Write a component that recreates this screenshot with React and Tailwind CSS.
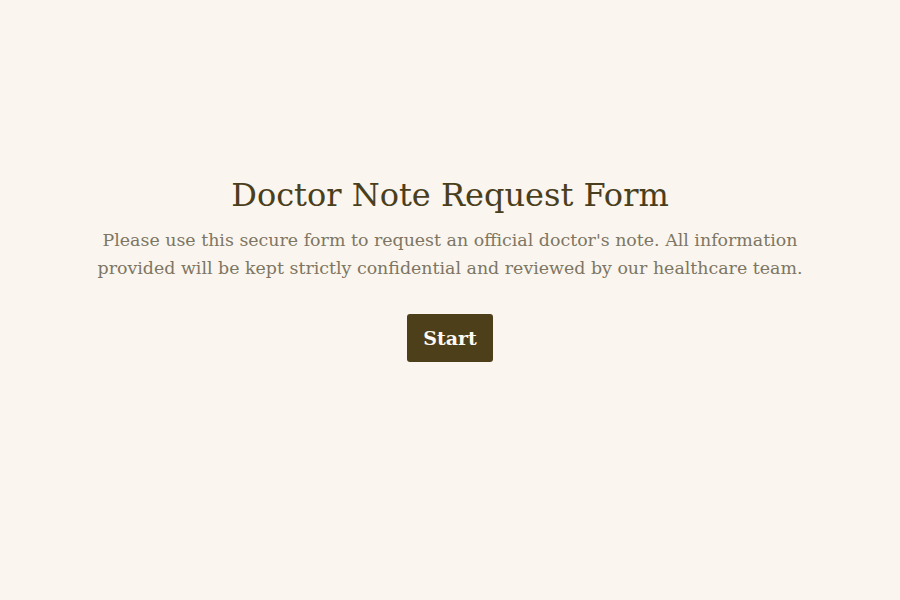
export default function App() {
  return (
    <div className="min-h-screen w-full bg-[#faf5ee] flex flex-col items-center pt-[173px] font-['DejaVu_Serif',serif]">
      <h1 className="text-[32px] leading-[44px] text-[#4a3f1d]">Doctor Note Request Form</h1>
      <p className="mt-[9px] max-w-[740px] text-center text-[17.4px] leading-[28px] text-[#7d7663]">
        Please use this secure form to request an official doctor's note. All information provided will be kept strictly confidential and reviewed by our healthcare team.
      </p>
      <button className="mt-[32px] h-[48px] px-[16px] rounded-[3px] bg-[#4d3f1a] text-[#fdf9f0] text-[19px] font-bold">
        Start
      </button>
    </div>
  );
}
